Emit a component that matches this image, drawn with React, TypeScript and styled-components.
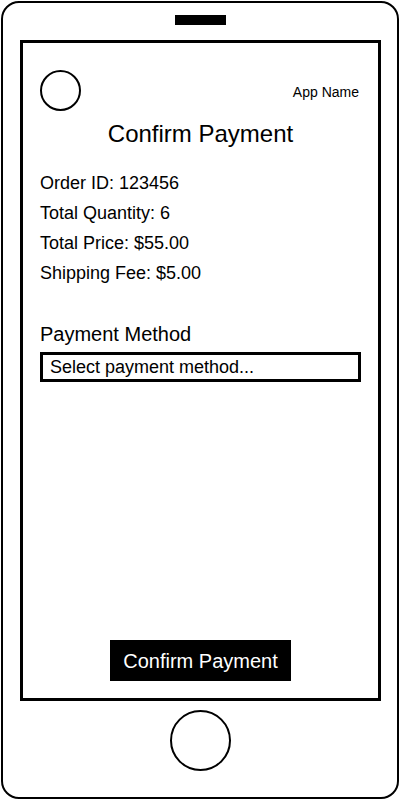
import styled, { createGlobalStyle } from 'styled-components'

const GlobalStyle = createGlobalStyle`
  html, body {
    margin: 0;
    padding: 0;
    background: #ffffff;
  }
  body {
    font-family: "Liberation Sans", Arial, sans-serif;
    color: #000000;
  }
  * {
    box-sizing: border-box;
  }
`

const Phone = styled.div`
  width: 398px;
  height: 798px;
  margin: 1px;
  border: 2px solid #000;
  border-radius: 18px;
  display: flex;
  flex-direction: column;
  align-items: center;
  background: #fff;
`

const Speaker = styled.div`
  width: 51px;
  height: 10px;
  margin-top: 12px;
  background: #000;
`

const Screen = styled.div`
  align-self: flex-start;
  margin: 15px 0 0 17px;
  width: 361px;
  height: 661px;
  border: 3px solid #000;
  display: flex;
  flex-direction: column;
  padding: 27px 17px 17px 17px;
`

const Header = styled.div`
  display: flex;
  align-items: center;
  justify-content: space-between;
  height: 40px;
  padding-right: 2px;
`

const Avatar = styled.div`
  width: 41px;
  height: 41px;
  border: 2px solid #000;
  border-radius: 50%;
`

const AppName = styled.span`
  font-size: 14px;
  line-height: 16px;
  margin-top: 4px;
`

const Title = styled.h1`
  margin: 10px 0 0;
  font-size: 24px;
  font-weight: 400;
  line-height: 28px;
  text-align: center;
`

const InfoList = styled.div`
  margin-top: 20px;
  display: flex;
  flex-direction: column;
`

const InfoLine = styled.div`
  font-size: 18px;
  line-height: 30px;
`

const Label = styled.div`
  margin-top: 34px;
  font-size: 20px;
  line-height: 24px;
`

const Select = styled.div`
  margin-top: 6px;
  width: 321px;
  height: 30px;
  border: 3px solid #000;
  padding-left: 7px;
  font-size: 18px;
  line-height: 24px;
`

const ConfirmButton = styled.button`
  margin: auto auto 0;
  width: 181px;
  height: 41px;
  border: none;
  padding: 2px 0 0 0;
  background: #000;
  color: #fff;
  font-family: inherit;
  font-size: 20px;
  line-height: 39px;
`

const HomeButton = styled.div`
  margin-top: 9px;
  width: 61px;
  height: 61px;
  border: 2px solid #000;
  border-radius: 50%;
`

const orderLines = [
  'Order ID: 123456',
  'Total Quantity: 6',
  'Total Price: $55.00',
  'Shipping Fee: $5.00',
]

export default function App() {
  return (
    <>
      <GlobalStyle />
      <Phone>
        <Speaker />
        <Screen>
          <Header>
            <Avatar />
            <AppName>App Name</AppName>
          </Header>
          <Title>Confirm Payment</Title>
          <InfoList>
            {orderLines.map((line) => (
              <InfoLine key={line}>{line}</InfoLine>
            ))}
          </InfoList>
          <Label>Payment Method</Label>
          <Select>Select payment method...</Select>
          <ConfirmButton>Confirm Payment</ConfirmButton>
        </Screen>
        <HomeButton />
      </Phone>
    </>
  )
}
